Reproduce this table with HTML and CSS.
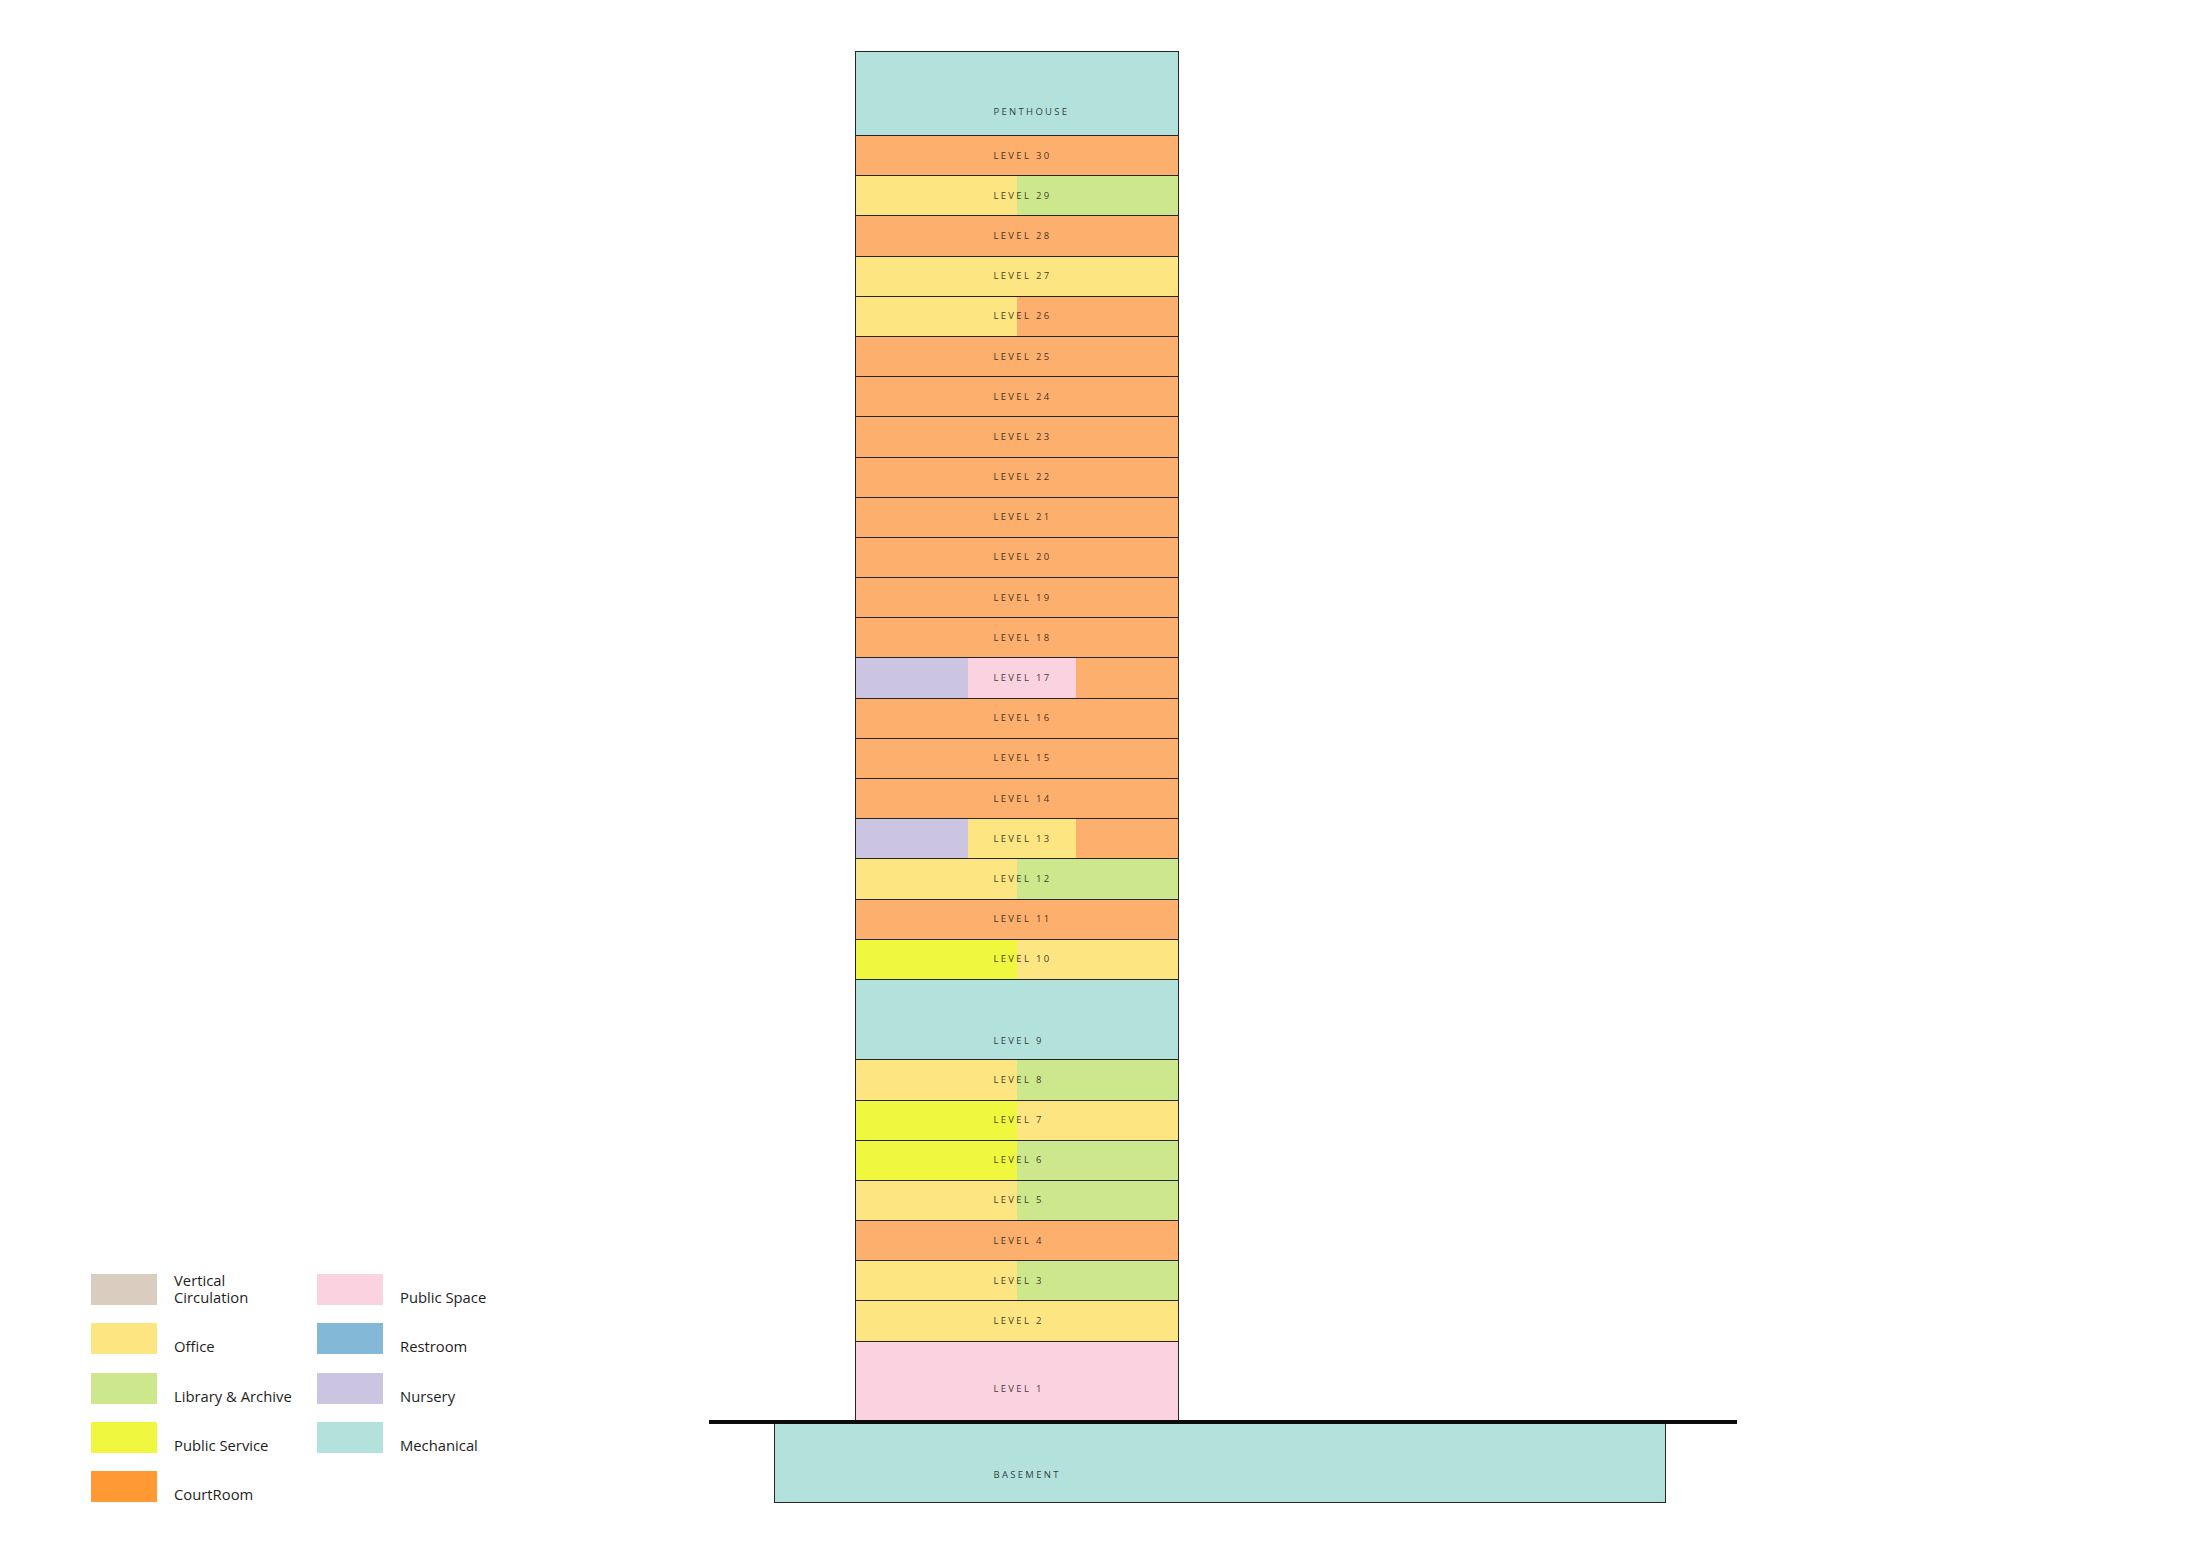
FILE: index.html
```html
<!DOCTYPE html>
<html lang="en">
<head>
<meta charset="utf-8">
<title>Stacking Diagram</title>
<link rel="stylesheet" href="styles.css">
</head>
<body>
<div class="page">
  <div class="legend">
    <div class="item"><span class="sw c-vert"></span><span class="lbl">Vertical<br>Circulation</span></div>
    <div class="item"><span class="sw c-office"></span><span class="lbl">Office</span></div>
    <div class="item"><span class="sw c-library"></span><span class="lbl">Library &amp; Archive</span></div>
    <div class="item"><span class="sw c-service"></span><span class="lbl">Public Service</span></div>
    <div class="item"><span class="sw c-court-legend"></span><span class="lbl">CourtRoom</span></div>
    <div class="item"><span class="sw c-pink"></span><span class="lbl">Public Space</span></div>
    <div class="item"><span class="sw c-rest"></span><span class="lbl">Restroom</span></div>
    <div class="item"><span class="sw c-nursery"></span><span class="lbl">Nursery</span></div>
    <div class="item"><span class="sw c-mech"></span><span class="lbl">Mechanical</span></div>
  </div>

  <div class="diagram">
    <div class="tower">
      <div class="floor penthouse"><div class="segs"><span class="seg fill c-mech"></span></div><span class="label">PENTHOUSE</span></div>
      <div class="floor"><div class="segs"><span class="seg fill c-court"></span></div><span class="label">LEVEL 30</span></div>
      <div class="floor"><div class="segs"><span class="seg half c-office"></span><span class="seg fill c-library"></span></div><span class="label">LEVEL 29</span></div>
      <div class="floor"><div class="segs"><span class="seg fill c-court"></span></div><span class="label">LEVEL 28</span></div>
      <div class="floor"><div class="segs"><span class="seg fill c-office"></span></div><span class="label">LEVEL 27</span></div>
      <div class="floor"><div class="segs"><span class="seg half c-office"></span><span class="seg fill c-court"></span></div><span class="label">LEVEL 26</span></div>
      <div class="floor"><div class="segs"><span class="seg fill c-court"></span></div><span class="label">LEVEL 25</span></div>
      <div class="floor"><div class="segs"><span class="seg fill c-court"></span></div><span class="label">LEVEL 24</span></div>
      <div class="floor"><div class="segs"><span class="seg fill c-court"></span></div><span class="label">LEVEL 23</span></div>
      <div class="floor"><div class="segs"><span class="seg fill c-court"></span></div><span class="label">LEVEL 22</span></div>
      <div class="floor"><div class="segs"><span class="seg fill c-court"></span></div><span class="label">LEVEL 21</span></div>
      <div class="floor"><div class="segs"><span class="seg fill c-court"></span></div><span class="label">LEVEL 20</span></div>
      <div class="floor"><div class="segs"><span class="seg fill c-court"></span></div><span class="label">LEVEL 19</span></div>
      <div class="floor"><div class="segs"><span class="seg fill c-court"></span></div><span class="label">LEVEL 18</span></div>
      <div class="floor"><div class="segs"><span class="seg third-a c-nursery"></span><span class="seg third-b c-pink"></span><span class="seg fill c-court"></span></div><span class="label">LEVEL 17</span></div>
      <div class="floor"><div class="segs"><span class="seg fill c-court"></span></div><span class="label">LEVEL 16</span></div>
      <div class="floor"><div class="segs"><span class="seg fill c-court"></span></div><span class="label">LEVEL 15</span></div>
      <div class="floor"><div class="segs"><span class="seg fill c-court"></span></div><span class="label">LEVEL 14</span></div>
      <div class="floor"><div class="segs"><span class="seg third-a c-nursery"></span><span class="seg third-b c-office"></span><span class="seg fill c-court"></span></div><span class="label">LEVEL 13</span></div>
      <div class="floor"><div class="segs"><span class="seg half c-office"></span><span class="seg fill c-library"></span></div><span class="label">LEVEL 12</span></div>
      <div class="floor"><div class="segs"><span class="seg fill c-court"></span></div><span class="label">LEVEL 11</span></div>
      <div class="floor"><div class="segs"><span class="seg half c-service"></span><span class="seg fill c-office"></span></div><span class="label">LEVEL 10</span></div>
      <div class="floor level9"><div class="segs"><span class="seg fill c-mech"></span></div><span class="label">LEVEL 9</span></div>
      <div class="floor"><div class="segs"><span class="seg half c-office"></span><span class="seg fill c-library"></span></div><span class="label">LEVEL 8</span></div>
      <div class="floor"><div class="segs"><span class="seg half c-service"></span><span class="seg fill c-office"></span></div><span class="label">LEVEL 7</span></div>
      <div class="floor"><div class="segs"><span class="seg half c-service"></span><span class="seg fill c-library"></span></div><span class="label">LEVEL 6</span></div>
      <div class="floor"><div class="segs"><span class="seg half c-office"></span><span class="seg fill c-library"></span></div><span class="label">LEVEL 5</span></div>
      <div class="floor"><div class="segs"><span class="seg fill c-court"></span></div><span class="label">LEVEL 4</span></div>
      <div class="floor"><div class="segs"><span class="seg half c-office"></span><span class="seg fill c-library"></span></div><span class="label">LEVEL 3</span></div>
      <div class="floor"><div class="segs"><span class="seg fill c-office"></span></div><span class="label">LEVEL 2</span></div>
      <div class="floor level1"><div class="segs"><span class="seg fill c-pink"></span></div><span class="label">LEVEL 1</span></div>
    </div>
    <div class="ground"></div>
    <div class="basement"><span class="label">BASEMENT</span></div>
  </div>
</div>
</body>
</html>
```

FILE: styles.css
```css
html, body {
  margin: 0;
  padding: 0;
  background: #ffffff;
}

.page {
  width: 2200px;
  height: 1555px;
  box-sizing: border-box;
  padding: 51px 0 0 91px;
  display: grid;
  grid-template-columns: 618px 1028px;
  align-content: start;
  align-items: start;
  font-family: "Open Sans", "Noto Sans", "Liberation Sans", sans-serif;
}

/* ---------- Legend ---------- */
.legend {
  align-self: end;
  display: grid;
  grid-auto-flow: column;
  grid-template-rows: repeat(5, 31px);
  grid-template-columns: 226px 200px;
  row-gap: 18.3px;
  margin-bottom: 0.5px;
}

.item {
  display: flex;
  align-items: flex-end;
  gap: 17px;
}

.sw {
  flex: 0 0 66px;
  height: 31px;
}

.lbl {
  font-size: 14.8px;
  line-height: 17px;
  color: #1e1e1e;
  margin-bottom: -1px;
}

/* ---------- Colours ---------- */
.c-vert { background: #dbccc0; }
.c-office { background: #fde582; }
.c-library { background: #cde88c; }
.c-service { background: #eff83e; }
.c-court { background: #fdb06d; }
.c-court-legend { background: #ff9933; }
.c-pink { background: #fbd2e0; }
.c-rest { background: #83b8d6; }
.c-nursery { background: #cbc5e1; }
.c-mech { background: #b3e1dc; }

/* ---------- Diagram ---------- */
.diagram {
  display: flex;
  flex-direction: column;
}

.tower {
  margin-left: 146px;
  width: 324px;
  box-sizing: border-box;
  border: 1.5px solid #262626;
  border-bottom: none;
  display: flex;
  flex-direction: column;
}

.floor {
  display: grid;
  height: 40.2px;
  box-sizing: border-box;
  border-bottom: 1.5px solid #262626;
}

.floor.penthouse { height: 84px; }
.floor.level9 { height: 80.4px; }
.floor.level1 { height: 78px; border-bottom: none; }

.segs {
  grid-area: 1 / 1;
  display: flex;
}

.seg { display: block; }
.seg.half { flex: 0 0 160.5px; }
.seg.third-a { flex: 0 0 111.5px; }
.seg.third-b { flex: 0 0 108px; }
.seg.fill { flex: 1 1 auto; }

.label {
  grid-area: 1 / 1;
  align-self: center;
  padding-left: 137.5px;
  font-size: 9.5px;
  line-height: 12px;
  letter-spacing: 2.3px;
  color: rgba(15, 15, 15, 0.82);
  white-space: nowrap;
}

.penthouse .label { align-self: end; padding-bottom: 17px; }
.level9 .label { align-self: end; padding-bottom: 12px; }
.level1 .label { align-self: end; padding-bottom: 25px; }

.ground {
  width: 1028px;
  height: 4px;
  background: #0c0c0c;
}

.basement {
  margin-left: 65px;
  width: 892px;
  height: 79px;
  box-sizing: border-box;
  border: 1.5px solid #262626;
  border-top: none;
  background: #b3e1dc;
  display: flex;
  align-items: flex-end;
}

.basement .label {
  align-self: flex-end;
  padding-left: 218.5px;
  padding-bottom: 20.5px;
}
```
